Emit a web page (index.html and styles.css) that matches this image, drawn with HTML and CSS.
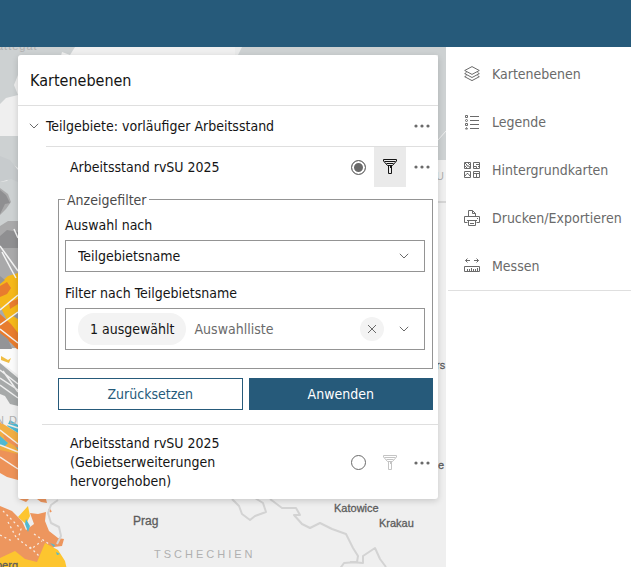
FILE: index.html
```html
<!DOCTYPE html>
<html lang="de">
<head>
<meta charset="utf-8">
<meta name="viewport" content="width=device-width, initial-scale=1">
<title>Kartenebenen</title>
<link rel="stylesheet" href="styles.css">
</head>
<body>
<header class="topbar"></header>
<main class="workspace">
  <section class="map">
    <svg class="map-canvas" viewBox="0 47 446 520" preserveAspectRatio="xMinYMin slice" aria-hidden="true">
      <rect y="47" width="446" height="520" fill="#efefef"/>
      <path fill="#cdd1d2" d="M0 47H75L70 55 62 52 60 60H18V75L14 85 18 95 6 98 0 104ZM235 47H446V160H438V55H238ZM0 136H18V168L10 163 0 160ZM14 172 18 173V208H0V182L7 181Z"/>
      <path fill="#e9eaea" d="M235 47h7l-4 8h-3z"/>
      <path fill="#c7cbcd" d="M0 156l10 4 8 10v12l-7-3-11 3z"/>
      <path d="M438 140l8-9" stroke="#eee" fill="none"/>
      <path fill="#cdd1d2" d="M0 182h18v50H0z"/>
      <path fill="#a9a9aa" d="M0 188l8 6 3 8-5 7-6 6zM0 226l8-5 10 0v52H0z"/>
      <path fill="#8f8f91" d="M0 190l6 5 4 8-5 1-5 10zM0 236l7-6 11 2v27l-7-4-6 3-5-8z"/>
      <path fill="#a9a9aa" d="M0 248h18v100H0z"/>
      <path fill="#f5b81a" d="M18 273v67l-8-10-4-12-6-12v-23l8-7z"/>
      <path fill="#e87c2e" d="M0 286l7-4 4 6-4 6-7 3zM0 314l11 10 7 9v17l-7-7-11-9zM9 302l9-3v5l-8 5z"/>
      <path fill="#949497" d="M0 333l8 6 4 10H0zM0 276l5 4-5 4zM13 316l5-4v7z"/>
      <path fill="#fff" d="M0 349h18v26l-9-7-9-5z" opacity=".75"/>
      <path fill="none" stroke="#f4f4f4" stroke-width="1.5" d="M0 246l18 25M2 252l9 17 5 9M0 310l18-15M0 325l18-13M0 329l18 14M14 229l4 9"/>
      <path fill="#f0bd43" d="M1 356l7 4 3-2-2 5-8-3z"/>
      <path fill="#a6a9a9" d="M0 363l18 15v28l-8-2-5-8-5-2z"/>
      <path fill="none" stroke="#efefef" stroke-width="1.5" d="M0 370l18 14M0 378l18 12M0 385l18 13M3 371l15 21"/>
      <path fill="#f1ae43" d="M0 422l18 11v35L0 459z"/>
      <path fill="#4fb9d3" d="M7 426l11 7v-8l-8-5zM0 436l8 7-4 4-4-1zM12 441l6 4v5z"/>
      <path fill="#ed9258" d="M0 450l18 4v26l-11-3-7-4zM3 434l15 10v4l-13-8z"/>
      <path fill="none" stroke="#f6eee7" stroke-width="1.5" d="M0 430l18 14M0 445l18 7M0 457l18 12M6 424l12 4"/>
      <path fill="#ed965e" d="M0 506l12 5 10 10 4 9 8-6-4-11 8 1 8-2-1 9 4 10 9 7 6 1-2 7-8 1-8 8-10 12H0zM19 499h10l-3 3zM37 499h9l1 4-6-1z"/>
      <path fill="#fdc52f" d="M18 517l10-11 2 10-4 8zM0 567v-9l15-7 10 8 12 3 8-19 13 7 7 11 3 13z"/>
      <path fill="#4fb9d3" d="M26 519l4 7-2 6-3-8zM50 543l5 2-1 2zM56 552l4 2-3 1z"/>
      <path fill="none" stroke="#f6e9df" stroke-width="1.3" stroke-dasharray="2 3" d="M3 511l18 18-3 10 13 10 11-8M8 522l9 17M0 535l12 6M34 534l15 10M30 547l9 9"/>
      <path fill="none" stroke="#ed965e" stroke-width="2" d="M49 509l2 3"/>
      <path fill="none" stroke="#d3d3d3" stroke-width="2" stroke-linejoin="round" d="M58 500l-7 5-3 8 3 10 8 4 2 9-4 8M232 499l7 7 3 8 8 6 5-4 11-4-3-9-8-5M270 499l12 9 14 0 4 7-6 0 8 9 8 4 10-5 12 6 14 5 7 14 5 8-1 6-13 1-5 7M350 562l13 1 0-7 12-8 5 11 6 8"/>
      <path d="M438 202h8" stroke="#d5d5d5" stroke-width="2"/>
      <g class="map-country">
        <text x="-3" y="50">attegat</text>
        <text x="436" y="180">U S</text>
        <text x="-4" y="424">N D</text>
        <text x="154" y="558" class="map-wide">TSCHECHIEN</text>
      </g>
      <g class="map-city">
        <text x="133" y="525" class="map-big">Prag</text>
        <text x="334" y="512">Katowice</text>
        <text x="379" y="527">Krakau</text>
        <text x="436" y="369">rs</text>
        <text x="438" y="469">e</text>
        <text x="-4" y="569">berg</text>
      </g>
    </svg>

    <section class="panel" aria-labelledby="panel-title">
      <h1 class="panel-title" id="panel-title">Kartenebenen</h1>
      <div class="group-row">
        <button class="icon-button toggle" type="button" aria-label="Gruppe einklappen"><svg width="10" height="6" viewBox="0 0 10 6"><path d="M.8 .8 5 5 9.200 .8"/></svg></button>
        <h2 class="group-title">Teilgebiete: vorläufiger Arbeitsstand</h2>
        <button class="icon-button" type="button" aria-label="Optionen"><svg class="dots" width="16" height="4" viewBox="0 0 16 4"><circle cx="2" cy="2" r="1.600"/><circle cx="8" cy="2" r="1.600"/><circle cx="14" cy="2" r="1.600"/></svg></button>
      </div>

      <div class="layer">
        <div class="layer-row">
          <label class="layer-name" for="layer-a">Arbeitsstand rvSU 2025</label>
          <span class="radio-cell"><input class="radio" type="radio" name="layer" id="layer-a" checked></span>
          <button class="icon-button active" type="button" aria-label="Filter"><svg width="16" height="16" viewBox="0 0 16 16"><path d="M1.500.500h13v1.500L10.500 6.500h-5L1.500 2zM2.500 2.500h11M4.500 4.500h7M6.500 6.500v8h3v-8M8.500 7v2"/></svg></button>
          <button class="icon-button" type="button" aria-label="Optionen"><svg class="dots" width="16" height="4" viewBox="0 0 16 4"><circle cx="2" cy="2" r="1.600"/><circle cx="8" cy="2" r="1.600"/><circle cx="14" cy="2" r="1.600"/></svg></button>
        </div>
      </div>

      <form class="filter">
        <fieldset class="filter-box">
          <legend>Anzeigefilter</legend>
          <label class="field-label" for="field">Auswahl nach</label>
          <div class="select-box">
            <select id="field"><option>Teilgebietsname</option></select>
            <svg class="chevron" width="10" height="6" viewBox="0 0 10 6"><path d="M.8 .8 5 5 9.200 .8"/></svg>
          </div>
          <label class="field-label" for="values">Filter nach Teilgebietsname</label>
          <div class="combo">
            <span class="chip">1 ausgewählt</span>
            <input id="values" type="text" placeholder="Auswahlliste">
            <button class="clear" type="button" aria-label="Auswahl löschen"><svg width="10" height="10" viewBox="0 0 10 10"><path d="M1 1l8 8M9 1 1 9"/></svg></button>
            <button class="icon-button open" type="button" aria-label="Liste öffnen"><svg width="10" height="6" viewBox="0 0 10 6"><path d="M.8 .8 5 5 9.200 .8"/></svg></button>
          </div>
        </fieldset>
        <div class="actions">
          <button class="action" type="reset">Zurücksetzen</button>
          <button class="action primary" type="submit">Anwenden</button>
        </div>
      </form>

      <div class="layer last">
        <div class="layer-row">
          <label class="layer-name" for="layer-b">Arbeitsstand rvSU 2025 (Gebietserweiterungen hervorgehoben)</label>
          <span class="radio-cell"><input class="radio" type="radio" name="layer" id="layer-b"></span>
          <button class="icon-button" type="button" aria-label="Filter" disabled><svg width="16" height="16" viewBox="0 0 16 16"><path d="M1.500.500h13v1.500L10.500 6.500h-5L1.500 2zM2.500 2.500h11M4.500 4.500h7M6.500 6.500v8h3v-8M8.500 7v2"/></svg></button>
          <button class="icon-button" type="button" aria-label="Optionen"><svg class="dots" width="16" height="4" viewBox="0 0 16 4"><circle cx="2" cy="2" r="1.600"/><circle cx="8" cy="2" r="1.600"/><circle cx="14" cy="2" r="1.600"/></svg></button>
        </div>
      </div>
    </section>
  </section>

  <aside class="sidebar">
    <nav class="tools" aria-label="Werkzeuge">
      <button class="tool" type="button"><svg width="16" height="16" viewBox="0 0 16 16"><path d="M8 .6 15.300 4.500 8 8.400.7 4.500zM2.500 6.600.7 7.600 8 11.500l7.300-3.900-1.800-1M2.500 9.700.7 10.700 8 14.600l7.300-3.900-1.800-1"/></svg>Kartenebenen</button>
      <button class="tool" type="button"><svg width="16" height="16" viewBox="0 0 16 16"><path d="M6 2.500h9M6 6.500h9M6 10.500h9M6 14.500h9M1.500 1.500h2v2h-2zM1.500 9.500h2v2h-2z"/><circle cx="2.500" cy="6.500" r="1"/><path d="M2.500 13.500l1 1.500h-2z"/></svg>Legende</button>
      <button class="tool" type="button"><svg width="16" height="16" viewBox="0 0 16 16"><path d="M.5.500h6v6h-6zM9.500.500h6v6h-6zM.5 9.500h6v6h-6zM9.500 9.500h6v6h-6zM1 1l2 2v1h2l1 2M1 4l2 2M4 1l2 2M10 4.500h2.500V6M12 2.500h3M14 4.500h1M1 14l2-2.500h1L6 14M10 11.500h5M12.500 12v3"/></svg>Hintergrundkarten</button>
      <button class="tool" type="button"><svg width="16" height="16" viewBox="0 0 16 16"><path d="M3.500 12.500h-3v-6h15v6h-3M4.500 6.500v-6h4l3 3v3M8.500.500v3h3M4.500 10.500h7v5h-7zM3 10.500h10M6 13.500h4M13 8.500h1"/></svg>Drucken/Exportieren</button>
      <button class="tool" type="button"><svg width="16" height="16" viewBox="0 0 16 16"><path d="M.5 8.500h15v5H.5zM3.500 11v2M5.500 11v2M7.500 10v3M9.500 11v2M11.500 11v2M13.500 10v3M6 2.500H1.500M3.500.500l-2 2 2 2M10 2.500h4.500M12.500.500l2 2-2 2"/></svg>Messen</button>
    </nav>
  </aside>
</main>
</body>
</html>
```

FILE: styles.css
```css
* {
  box-sizing: border-box;
}

body {
  margin: 0;
  min-height: 100vh;
  display: flex;
  flex-direction: column;
  background: #fff;
  color: #151515;
  font: 14px/19px "DejaVu Sans Condensed", "Noto Sans", sans-serif;
}

button,
input,
select {
  font: inherit;
  color: inherit;
  margin: 0;
}

button {
  border: 0;
  padding: 0;
  background: none;
}

svg {
  flex: none;
  fill: none;
  stroke: currentColor;
}

.topbar {
  height: 47px;
  background: #265a7a;
}

.workspace {
  flex: 1;
  display: flex;
}

.map {
  position: relative;
  flex: 1;
  min-width: 0;
  padding: 8px 8px 68px 18px;
  overflow: hidden;
}

.map-canvas {
  position: absolute;
  inset: 0;
  width: 100%;
  height: 100%;
  stroke: none;
}

.map-country,
.map-city {
  font-family: "Liberation Sans", sans-serif;
  font-size: 11px;
}

.map-country {
  fill: #b0b0b0;
  letter-spacing: 1px;
}

.map-country .map-wide {
  letter-spacing: 3px;
}

.map-city {
  fill: #5c5c5c;
  stroke: #5c5c5c;
  stroke-width: 0.3;
}

.map-city .map-big {
  font-size: 12px;
}

.panel {
  position: relative;
  background: #fff;
  border-radius: 3px;
  box-shadow: 0 2px 6px rgba(0, 0, 0, 0.16);
}

.panel-title {
  margin: 0;
  padding: 16px 12px 15px;
  border-bottom: 1px solid #dfdfdf;
  font-size: 16px;
  font-weight: 400;
}

.group-row {
  display: flex;
  align-items: center;
}

.group-title {
  flex: 1;
  margin: 0;
  font-size: 14px;
  font-weight: 400;
}

.icon-button {
  width: 32px;
  height: 40px;
  display: flex;
  align-items: center;
  justify-content: center;
  color: #6a6a6a;
}

.icon-button.toggle {
  width: 28px;
  padding-left: 4px;
}

.icon-button.active {
  background: #eaeaea;
  color: #151515;
}

.icon-button:disabled {
  color: #c4c4c4;
}

.dots {
  fill: currentColor;
  stroke: none;
}

.layer {
  margin-left: 28px;
  border-top: 1px solid #dfdfdf;
}

.layer.last {
  margin-left: 24px;
  padding: 9px 0 8px 4px;
}

.layer-row {
  display: flex;
  align-items: center;
  padding-left: 24px;
}

.layer-name {
  flex: 1;
  padding-right: 96px;
}

.layer:not(.last) .layer-name {
  padding-right: 0;
}

.radio-cell {
  width: 32px;
  display: flex;
  justify-content: center;
}

.radio {
  appearance: none;
  width: 15px;
  height: 15px;
  border: 1px solid #6a6a6a;
  border-radius: 50%;
  background: #fff;
}

.radio:checked {
  background: #6a6a6a;
  box-shadow: inset 0 0 0 2px #fff;
}

.filter {
  padding: 3px 5px 14px 40px;
}

.filter-box {
  margin: 0;
  min-width: 0;
  padding: 8px 7px 18px 6px;
  border: 1px solid #949494;
}

.filter-box legend {
  padding: 2px 2px 0;
  line-height: 16px;
  color: #4a4a4a;
}

.field-label {
  display: block;
  margin-bottom: 5px;
}

.select-box {
  position: relative;
  margin-bottom: 12px;
}

.select-box select {
  appearance: none;
  display: block;
  width: 100%;
  height: 32px;
  padding: 0 32px 0 12px;
  border: 1px solid #949494;
  border-radius: 0;
  background: #fff;
}

.chevron {
  position: absolute;
  top: 13px;
  right: 16px;
  color: #6a6a6a;
  pointer-events: none;
}

.combo {
  display: flex;
  align-items: center;
  height: 42px;
  padding: 0 4px 0 12px;
  border: 1px solid #949494;
}

.chip {
  flex: none;
  padding: 7px 12px 6px;
  border-radius: 16px;
  background: #f3f3f3;
}

.combo input {
  flex: 1;
  min-width: 0;
  padding: 0 8px;
  border: 0;
  background: none;
}

.combo input::placeholder {
  color: #6a6a6a;
  opacity: 1;
}

.clear {
  width: 24px;
  height: 24px;
  display: flex;
  align-items: center;
  justify-content: center;
  border-radius: 50%;
  background: #f3f3f3;
  color: #6a6a6a;
}

.open {
  margin-left: 4px;
}

.actions {
  display: flex;
  gap: 6px;
  margin-top: 9px;
}

.action {
  flex: 1;
  height: 32px;
  border: 1px solid #265a7a;
  color: #265a7a;
}

.action.primary {
  background: #265a7a;
  color: #fff;
}

.sidebar {
  flex: 0 0 185px;
  padding: 3px 0 0 2px;
  background: #fff;
}

.tools {
  border-bottom: 1px solid #dfdfdf;
}

.tool {
  display: flex;
  align-items: center;
  gap: 12px;
  width: 100%;
  height: 48px;
  padding: 0 8px 0 16px;
  color: #6a6a6a;
}
```
